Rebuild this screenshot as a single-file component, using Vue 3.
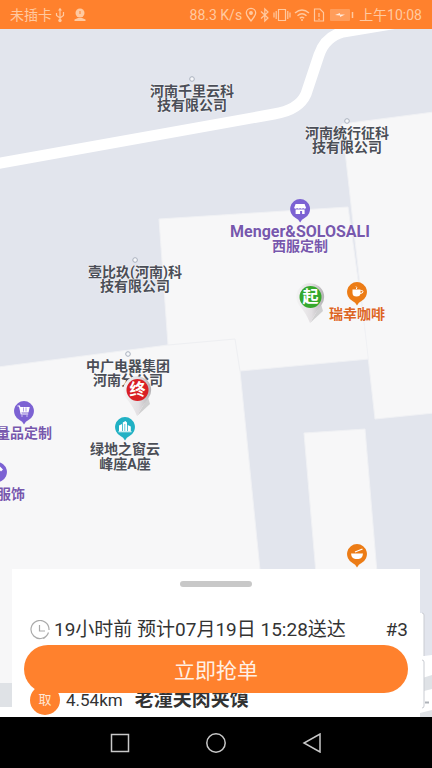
<script setup>
const places = [
  { x: 192, y: 79, kind: 'dot', lines: ['河南千里云科', '技有限公司'] },
  { x: 347, y: 121, kind: 'dot', lines: ['河南统行征科', '技有限公司'] },
  { x: 135, y: 260, kind: 'dot', lines: ['壹比玖(河南)科', '技有限公司'] },
  { x: 128, y: 354, kind: 'dot', lines: ['中广电器集团', '河南分公司'] },
  { x: 300, y: 209, kind: 'shop', lines: ['Menger&SOLOSALI', '西服定制'] },
  { x: 357, y: 292, kind: 'cup', lines: ['瑞幸咖啡'] },
  { x: 24, y: 411, kind: 'cart', lines: ['量品定制'] },
  { x: -3, y: 472, kind: 'dress', lines: ['服饰'] },
  { x: 125, y: 427, kind: 'tower', lines: ['绿地之窗云', '峰座A座'] },
  { x: 357, y: 554, kind: 'bowl', lines: [] },
]
const statusHeight = 29
const stops = [
  { x: 312, y: 304, text: '起', color: '#35a82c' },
  { x: 139, y: 397, text: '终', color: '#d91f25' },
]
const at = (p) => ({ left: p.x + 'px', top: p.y - statusHeight + 'px' })
const isLatin = (line) => /^[\x20-\x7e]+$/.test(line)
</script>

<template>
  <div class="screen">
    <header class="status">
      <span>未插卡</span>
      <svg width="10" height="16" viewBox="0 0 10 16" fill="none" stroke="currentColor" stroke-width="1.2">
        <path d="M5 2v11M1.500 6v2.500L5 11l3.500-2.500V5" />
        <path d="M3 3.500 5 .8 7 3.500z" fill="currentColor" stroke="none" />
        <circle cx="5" cy="13.500" r="1.700" fill="currentColor" stroke="none" />
      </svg>
      <svg class="account" width="12" height="14" viewBox="0 0 12 14" fill="currentColor">
        <circle cx="6" cy="5" r="4.500" />
        <path d="M.5 13v-1.500L4 10h4l3.500 1.500V13z" />
        <path d="M6 3v3" stroke="#ff812d" />
      </svg>
      <span class="speed">88.3 K/s</span>
      <svg width="12" height="16" viewBox="0 0 12 16" fill="none" stroke="currentColor" stroke-width="1.300">
        <path d="M6 14C4 11 1.300 8.800 1.300 6a4.700 4.700 0 0 1 9.400 0C10.700 8.800 8 11 6 14z" />
        <circle cx="6" cy="6" r="1.300" fill="currentColor" />
      </svg>
      <svg width="10" height="16" viewBox="0 0 10 16" fill="none" stroke="currentColor" stroke-width="1.200">
        <path d="m1 4.500 7 6.500-3.200 3V2L8 5l-7 6.500" />
      </svg>
      <svg width="18" height="16" viewBox="0 0 18 16" fill="none" stroke="currentColor" stroke-width="1.200">
        <path d="M5.500 2.500h7v11h-7zM3.200 4v8M14.800 4v8M1 5.500v5M17 5.500v5" />
      </svg>
      <svg width="16" height="16" viewBox="0 0 16 16" fill="none" stroke="currentColor" stroke-width="1.400">
        <path d="M1 6q7-6 14 0M3.500 8.800q4.500-4 9 0M5.800 11.200q2.200-1.800 4.400 0" />
        <circle cx="8" cy="13" r="1" fill="currentColor" stroke="none" />
      </svg>
      <svg width="12" height="16" viewBox="0 0 12 16" fill="none" stroke="currentColor" stroke-width="1.200">
        <path d="M1.500 2H7l3.500 3.500V14h-9zM6 6v4M6 11.500V13" />
      </svg>
      <svg class="battery" width="24" height="14" viewBox="0 0 24 14">
        <rect x="0" y="1" width="20" height="12" rx="1" fill="currentColor" opacity=".4" />
        <path d="m5 7 5-2v1.500h5L10 9V7.500z" fill="#ffe9da" />
        <path d="M22.500 4v6" stroke="currentColor" stroke-width="1.500" />
      </svg>
      <time>上午10:08</time>
    </header>

    <main class="map">
      <svg class="ground" viewBox="0 29 432 688" preserveAspectRatio="xMinYMin slice" aria-hidden="true">
        <path d="M0 29h432v688H0z" fill="#e2e5ed" />
        <g fill="#f7f7f8" stroke="#f0f1f4" stroke-width="1">
          <path d="M159 219 348 207 369 359 240 371 261 580 270 690H-2V367L168 345z" />
          <path d="m342 124 92-12v301l-59 6z" />
          <path d="m304 433 61-4 15 180h-61z" />
        </g>
        <path d="M168 345l67-6 5 32" fill="none" stroke="#eeeff2" />
        <path d="M-5 164 274 114q25-4 32-20L319 55q6-18 24-23L440 16" fill="none" stroke="#fff" stroke-width="11" />
        <path d="M0 683h200l232-28v62H0z" fill="#fff" />
        <path d="M0 683h12v24H0zM416 680l16-5v14l-16 4zM416 714l16-4v7h-16z" fill="#dfe2e6" />
        <path d="M410 613h12q2 0 2 2v42h-14zM410 660h12q2 0 2 2v44q0 2-2 2h-12z" fill="#fff" />
        <path d="M422 613q2 0 2 2v41M422 660q2 0 2 2v44q0 2-2 2" fill="none" stroke="#c9ccd2" />
        <path d="M425 702.500h4" stroke="#aeb2b8" stroke-width="2" />
      </svg>

      <div v-for="p in places" :key="p.x + '-' + p.y" class="place" :class="p.kind" :style="at(p)">
        <svg v-if="p.kind === 'dot'" class="spot" viewBox="0 0 6 6">
          <circle cx="3" cy="3" r="2.300" fill="#f7f8fa" stroke="#a9b0bd" />
        </svg>
        <svg v-else class="pin" viewBox="0 0 22 26">
          <path class="body" d="M11 1a10 10 0 0 1 4.500 18.900Q12.500 21 11 24.500 9.500 21 6.500 19.900A10 10 0 0 1 11 1z" />
          <g v-if="p.kind === 'shop'" fill="#fff">
            <path d="M6.500 6h9l1.500 4q-1.500 1.500-3 0-1.500 1.500-3 0-1.500 1.500-3 0-1.500 1.500-3 0z" />
            <path d="M6.500 11.500h9V16H13v-3h-2v3H6.500z" />
          </g>
          <g v-else-if="p.kind === 'cup'">
            <path d="M6.500 8.500h8v3.500q0 3.500-4 3.500t-4-3.500z" fill="#fff" />
            <path d="M14.500 9.500h1.200q1.300 0 1.300 1.300 0 1.500-3 1.700M10 5.500q1.500 1 .3 2.500" fill="none" stroke="#fff" />
          </g>
          <g v-else-if="p.kind === 'cart'" fill="none" stroke="#fff" stroke-width="1.200">
            <path d="M4.500 6h2l1.700 8h7" /><path d="M7.500 7.500h8.500l-1 4.500H8.300z" fill="#fff" />
            <path d="M9 15.500v1M14 15.500v1M9 9.700h6.500" /><path d="M10.500 7.500v4M13 7.500v4" stroke="#7c62d3" stroke-width=".6" />
          </g>
          <path v-else-if="p.kind === 'dress'" d="M8 5.500h6l3 3-2 2-1-1V16H8V9.500l-1 1-2-2z" fill="#fff" />
          <g v-else-if="p.kind === 'tower'" fill="#fff">
            <path d="M5 9.500 8 8v7H5zM8.800 6.500 11.500 5 13 6.500V15H8.800zM13.800 9l3 1.500V15h-3zM4.500 15.300h13v1h-13z" />
            <path d="M10.800 8v7" stroke="#21b1c4" stroke-width=".7" />
          </g>
          <g v-else fill="#fff">
            <path d="M5 10.500h12q-.5 5-4.500 5.500h-3Q5.500 15.500 5 10.500z" />
            <path d="m9 9 7.500-3" stroke="#fff" stroke-width="1.300" />
          </g>
        </svg>
        <span v-for="line in p.lines" :key="line" class="line" :class="{ latin: isLatin(line) }">{{ line }}</span>
      </div>

      <div v-for="s in stops" :key="s.text" class="stop" :style="at(s)">
        <svg viewBox="0 0 34 42" aria-hidden="true">
          <defs>
            <linearGradient :id="'shell-' + s.x" x1="0" x2="1">
              <stop offset="0" stop-color="#f4f4f4" /><stop offset=".55" stop-color="#e2dfe2" /><stop offset="1" stop-color="#b4b1b4" />
            </linearGradient>
          </defs>
          <path d="m15 40 13-12-2-7z" fill="#777" opacity=".3" />
          <path d="M15 40Q11 30 4 22a14 13.500 0 1 1 23-1Q20 30 15 40z" :fill="'url(#shell-' + s.x + ')'" />
          <circle cx="15.500" cy="14" r="11" :fill="s.color" />
        </svg>
        <b>{{ s.text }}</b>
      </div>

      <section class="sheet">
        <div class="handle"></div>
        <div class="summary">
          <svg width="20" height="20" viewBox="0 0 20 20" fill="none" stroke="#aaa" stroke-width="1.200">
            <path d="M18.500 12.500A9 9 0 1 1 19 10M15.500 17a9 9 0 0 1-2.500 1.500M9.500 5v6H15" />
          </svg>
          <span class="eta">19小时前 预计07月19日 15:28送达</span>
          <span>#3</span>
        </div>
        <div class="pickup">
          <span class="badge">取</span>
          <span class="distance">4.54km</span>
          <strong>老潼关肉夹馍</strong>
        </div>
        <button class="grab" type="button">立即抢单</button>
      </section>
    </main>

    <nav class="keys">
      <button type="button" aria-label="最近任务"><svg viewBox="0 0 20 20"><rect x="1.500" y="1.500" width="17" height="17" /></svg></button>
      <button type="button" aria-label="主屏幕"><svg viewBox="0 0 20 20"><circle cx="10" cy="10" r="9.200" /></svg></button>
      <button type="button" aria-label="返回"><svg viewBox="0 0 20 20"><path d="M18 1v18L2 10z" /></svg></button>
    </nav>
  </div>
</template>

<style>
body { margin: 0; }
</style>

<style scoped>
* { box-sizing: border-box; }
.screen {
  display: flex;
  flex-direction: column;
  height: 100vh;
  overflow: hidden;
  font-family: Roboto, "Noto Sans CJK SC", sans-serif;
  color: #333;
}
button { font: inherit; border: 0; padding: 0; cursor: pointer; }
svg { display: block; flex: none; }
.status {
  display: flex;
  align-items: center;
  gap: 3px;
  height: 29px;
  padding: 0 10px;
  background: #ff812d;
  color: #ffc9a0;
  font-size: 14px;
  line-height: 20px;
  white-space: nowrap;
}
.account { margin-left: 6px; }
.speed { margin-left: auto; }
.battery { margin: 0 2px; }
.map {
  position: relative;
  flex: 1;
  min-height: 0;
  display: flex;
  flex-direction: column;
  overflow: hidden;
}
.ground { position: absolute; inset: 0; width: 100%; height: 100%; }
.place {
  position: absolute;
  display: flex;
  flex-direction: column;
  align-items: center;
  margin-top: -3px;
  transform: translateX(-50%);
  color: #4b4e57;
  font-size: 14px;
  font-weight: 700;
  line-height: 14px;
  white-space: nowrap;
}
.line { text-shadow: 0 0 1px #fff, 0 0 2px #fff; }
.latin { font-size: 16px; }
.spot { width: 6px; height: 6px; margin-bottom: 2px; }
.pin { width: 22px; height: 26px; }
.shop, .cup, .cart, .dress, .tower, .bowl { margin-top: -11px; line-height: 15px; }
.shop, .cart, .dress { color: #7758ad; }
.cup { color: #dc6524; }
.dress .line { margin-left: 28px; }
.shop .body, .cart .body, .dress .body { fill: #7c62d3; }
.cup .body, .bowl .body { fill: #ec7c16; }
.tower .body { fill: #21b1c4; }
.stop {
  position: absolute;
  width: 34px;
  height: 42px;
  margin: -21px 0 0 -17px;
}
.stop svg { width: 34px; height: 42px; }
.stop b {
  position: absolute;
  inset: 4px 3px auto 0;
  color: #fff;
  font-size: 16px;
  line-height: 20px;
  text-align: center;
}
.sheet {
  position: relative;
  display: flex;
  flex-direction: column;
  height: 148px;
  margin: auto 12px 0;
  padding: 12px 12px 0 18px;
  background: #fff;
}
.handle {
  align-self: center;
  width: 72px;
  height: 6px;
  margin-left: -6px;
  border-radius: 3px;
  background: #c8c8c8;
}
.summary {
  display: flex;
  align-items: center;
  gap: 4px;
  margin-top: 30px;
  font-size: 19px;
  line-height: 26px;
  white-space: nowrap;
}
.eta { flex: 1; }
.pickup {
  display: flex;
  align-items: center;
  margin-top: 42px;
  font-size: 17px;
  line-height: 30px;
  white-space: nowrap;
}
.badge {
  width: 30px;
  height: 30px;
  border-radius: 50%;
  background: #ff812d;
  color: #ffe6d5;
  font-size: 13px;
  text-align: center;
}
.distance { margin: 0 12px 0 6px; }
.pickup strong { font-size: 19px; font-weight: 700; }
.grab {
  position: absolute;
  left: 12px;
  right: 12px;
  bottom: 24px;
  height: 48px;
  border-radius: 24px;
  background: #ff812d;
  color: #fff0e4;
  font-size: 21px;
}
.keys {
  display: flex;
  justify-content: center;
  gap: 76px;
  align-items: center;
  height: 51px;
  background: #000;
}
.keys button { width: 20px; height: 20px; background: none; }
.keys svg { width: 20px; height: 20px; fill: none; stroke: #c8c8c8; stroke-width: 1.500; }
</style>
